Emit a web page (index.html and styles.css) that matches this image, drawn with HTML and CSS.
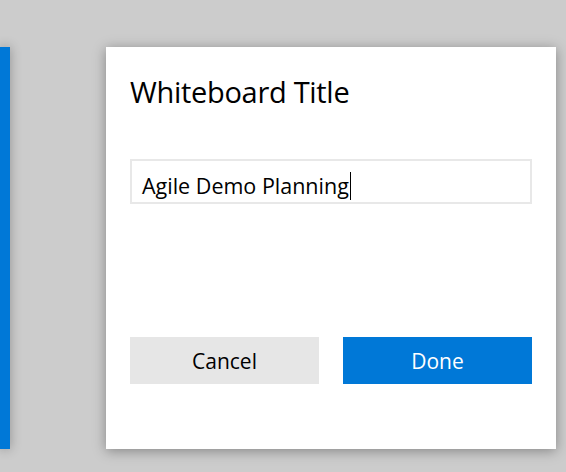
FILE: index.html
```html
<!DOCTYPE html>
<html lang="en">
<head>
<meta charset="utf-8">
<title>Whiteboard Title</title>
<link rel="stylesheet" href="styles.css">
</head>
<body>
<div class="stage">
  <div class="side-panel"></div>
  <div class="dialog">
    <h1 class="dialog-title">Whiteboard Title</h1>
    <div class="text-field"><span class="field-text">Agile Demo Planning</span><span class="caret"></span></div>
    <div class="dialog-actions">
      <button class="btn btn-secondary">Cancel</button>
      <button class="btn btn-primary">Done</button>
    </div>
  </div>
</div>
</body>
</html>
```
FILE: styles.css
```css
html, body {
  margin: 0;
  padding: 0;
}
body {
  background: #cccccc;
  width: 566px;
  height: 472px;
  overflow: hidden;
  font-family: "Open Sans", "Noto Sans", sans-serif;
  color: #000;
}
.stage {
  display: flex;
  align-items: flex-start;
  padding-top: 47px;
}
.side-panel {
  width: 10px;
  height: 402px;
  background: #0078d7;
  box-shadow: 0 0 12px rgba(0, 0, 0, 0.3);
}
.dialog {
  margin-left: 96px;
  width: 450px;
  height: 402px;
  box-sizing: border-box;
  background: #fff;
  box-shadow: 0 2px 12px rgba(0, 0, 0, 0.35);
  padding: 0 24px;
  display: flex;
  flex-direction: column;
}
.dialog-title {
  margin: 24px 0 0 0;
  font-size: 29px;
  font-weight: 400;
  line-height: 42px;
  letter-spacing: -0.3px;
}
.text-field {
  margin-top: 46px;
  height: 45px;
  box-sizing: border-box;
  border: 2px solid #e8e8e8;
  padding: 0 9px 1px 10px;
  display: flex;
  align-items: flex-end;
  font-size: 21.5px;
  letter-spacing: 0;
}
.field-text {
  line-height: 28px;
  padding-bottom: 1px;
}
.caret {
  display: inline-block;
  width: 1px;
  height: 28px;
  background: #000;
  margin-left: 1px;
  margin-bottom: 1px;
}
.dialog-actions {
  margin-top: 133px;
  display: flex;
  gap: 24px;
}
.btn {
  flex: 1;
  height: 47px;
  border: none;
  border-radius: 0;
  font-family: inherit;
  font-size: 21px;
  padding: 0;
  cursor: pointer;
}
.btn-secondary {
  background: #e6e6e6;
  color: #000;
}
.btn-primary {
  background: #0078d7;
  color: #fff;
}
```
